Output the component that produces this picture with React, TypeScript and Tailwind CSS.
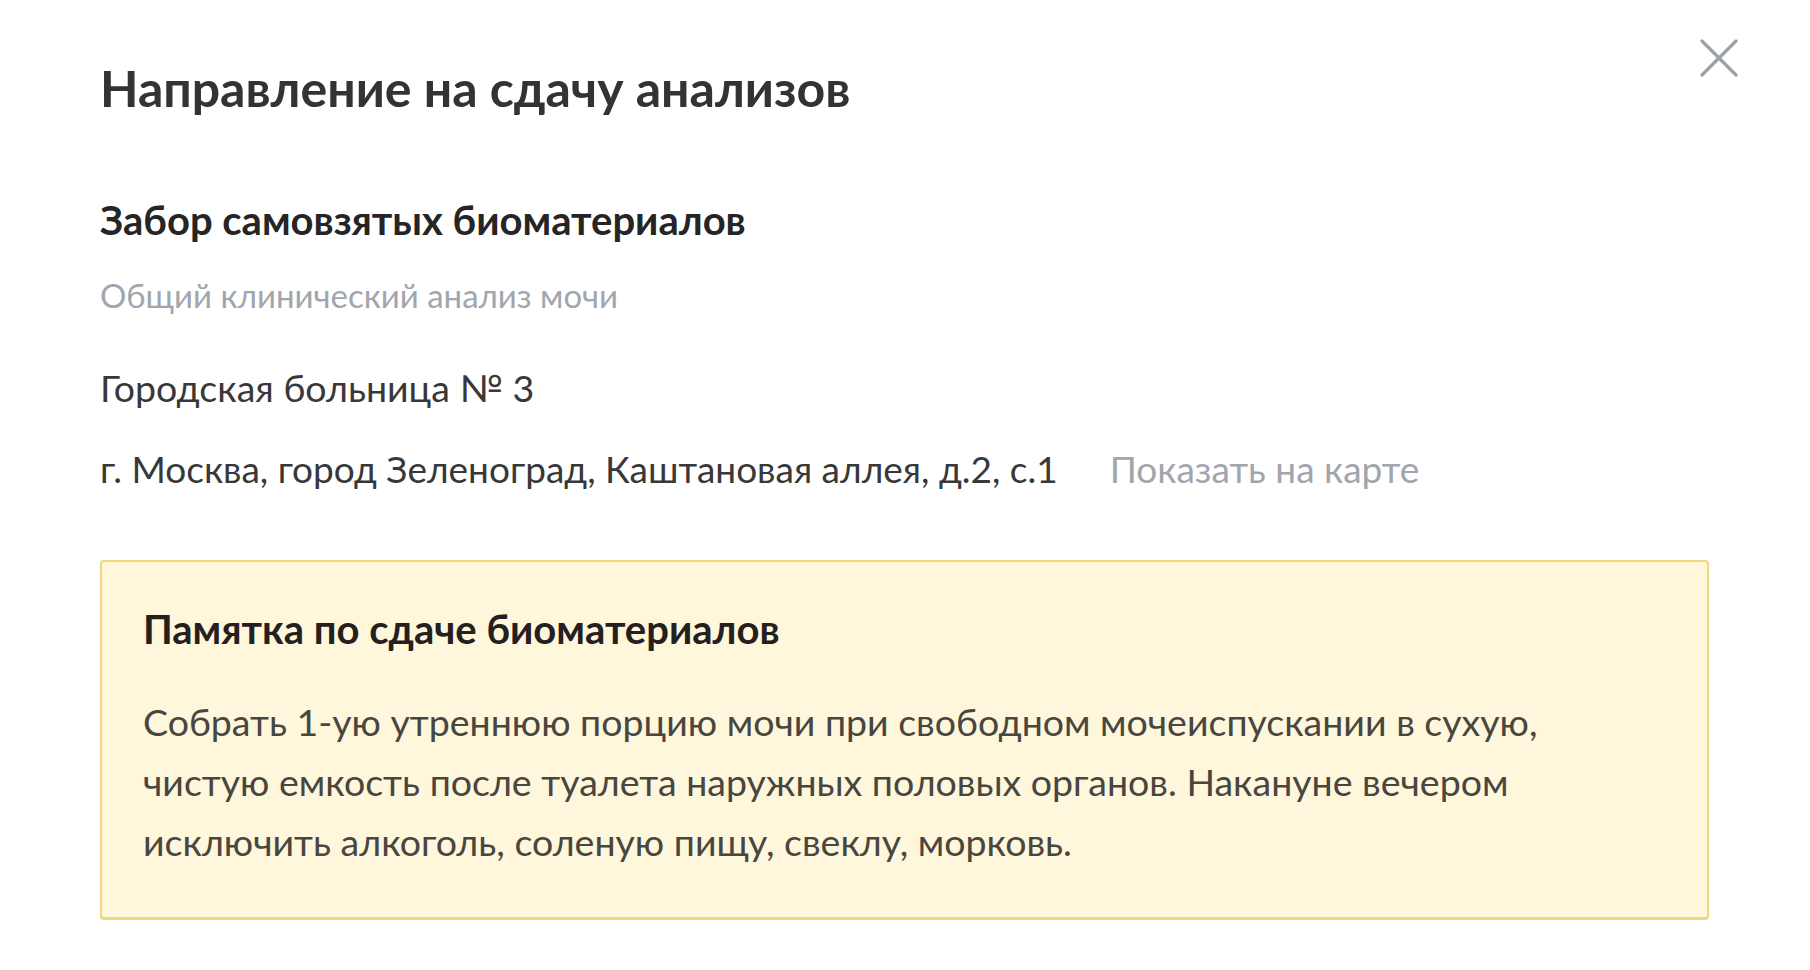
export default function App() {
  return (
    <div className="min-h-screen w-full bg-white font-['Lato','Noto_Sans',sans-serif]">
      <div className="relative px-[100px] pt-[58px]">
        <button className="absolute right-[72px] top-[39px] h-[38px] w-[38px] text-[#9ba1a9]">
          <svg viewBox="0 0 38 38" className="h-full w-full" fill="none" stroke="currentColor" strokeWidth="3.2" strokeLinecap="round">
            <path d="M2 2L36 36M36 2L2 36" />
          </svg>
        </button>

        <h1 className="text-[50px] font-bold leading-[60px] text-[#333333]">Направление на сдачу анализов</h1>

        <h2 className="mt-[78px] text-[40px] font-bold leading-[48px] text-[#252525]">Забор самовзятых биоматериалов</h2>
        <p className="mt-[31px] text-[33px] leading-[40px] text-[#a1a6ae]">Общий клинический анализ мочи</p>

        <p className="mt-[51px] text-[37.5px] leading-[44px] text-[#383838]">Городская больница № 3</p>
        <div className="mt-[37px] flex items-baseline gap-[52px] text-[37px] leading-[44px]">
          <span className="text-[#383838]">г. Москва, город Зеленоград, Каштановая аллея, д.2, с.1</span>
          <a className="text-[#a1a6ae]">Показать на карте</a>
        </div>

        <div className="mt-[69px] w-[1609px] rounded-[4px] border-2 border-[#f2d77c] bg-[#fef7dc] px-[41px] pt-[43px] pb-[45px] shadow-[0_1px_0_#f2d77c]">
          <h3 className="text-[40px] font-bold leading-[48px] text-[#252020]">Памятка по сдаче биоматериалов</h3>
          <p className="mt-[39px] text-[37.5px] leading-[60px] text-[#48463f]">
            Собрать 1-ую утреннюю порцию мочи при свободном мочеиспускании в сухую, чистую емкость после туалета наружных половых органов. Накануне вечером исключить алкоголь, соленую пищу, свеклу, морковь.
          </p>
        </div>
      </div>
    </div>
  );
}
